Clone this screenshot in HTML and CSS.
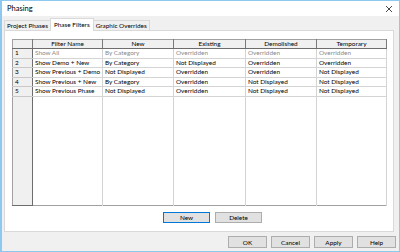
FILE: index.html
```html
<!DOCTYPE html>
<html lang="en">
<head>
    <meta charset="UTF-8">
    <title>Phasing</title>
    <link rel="stylesheet" href="styles.css">
</head>
<body>

<div class="dialog">
    <div class="titlebar">
        <span class="title">Phasing</span>
        <svg class="close" width="8" height="8" viewBox="0 0 8 8">
            <path d="M1 1 L7 7 M7 1 L1 7" stroke="#333" stroke-width="0.9" fill="none"/>
        </svg>
    </div>

    <div class="tabs">
        <div class="tab">Project Phases</div>
        <div class="tab active">Phase Filters</div>
        <div class="tab">Graphic Overrides</div>
    </div>

    <div class="panel">
        <table class="grid">
            <colgroup>
                <col class="c-num">
                <col class="c-name">
                <col class="c-new">
                <col class="c-existing">
                <col class="c-demo">
                <col class="c-temp">
            </colgroup>
            <thead>
                <tr>
                    <th class="rownum"></th>
                    <th>Filter Name</th>
                    <th>New</th>
                    <th>Existing</th>
                    <th>Demolished</th>
                    <th>Temporary</th>
                </tr>
            </thead>
            <tbody>
                <tr class="readonly">
                    <td class="rownum">1</td>
                    <td>Show All</td>
                    <td>By Category</td>
                    <td>Overridden</td>
                    <td>Overridden</td>
                    <td>Overridden</td>
                </tr>
                <tr>
                    <td class="rownum">2</td>
                    <td>Show Demo + New</td>
                    <td>By Category</td>
                    <td>Not Displayed</td>
                    <td>Overridden</td>
                    <td>Overridden</td>
                </tr>
                <tr>
                    <td class="rownum">3</td>
                    <td>Show Previous + Demo</td>
                    <td>Not Displayed</td>
                    <td>Overridden</td>
                    <td>Overridden</td>
                    <td>Not Displayed</td>
                </tr>
                <tr>
                    <td class="rownum">4</td>
                    <td>Show Previous + New</td>
                    <td>By Category</td>
                    <td>Overridden</td>
                    <td>Not Displayed</td>
                    <td>Not Displayed</td>
                </tr>
                <tr>
                    <td class="rownum">5</td>
                    <td>Show Previous Phase</td>
                    <td>Not Displayed</td>
                    <td>Overridden</td>
                    <td>Not Displayed</td>
                    <td>Not Displayed</td>
                </tr>
                <!-- empty space under the rows -->
                <tr class="filler">
                    <td class="rownum"></td>
                    <td></td>
                    <td></td>
                    <td></td>
                    <td></td>
                    <td></td>
                </tr>
            </tbody>
        </table>

        <div class="panel-actions">
            <button class="btn default">New</button>
            <button class="btn">Delete</button>
        </div>
    </div>

    <div class="footer">
        <button class="btn">OK</button>
        <button class="btn">Cancel</button>
        <button class="btn">Apply</button>
        <button class="btn">Help</button>
    </div>
</div>

</body>
</html>
```

FILE: styles.css
```css
body {
    margin: 0;
    padding: 0;
    font-family: Lato, "Liberation Sans", sans-serif;
    font-size: 6.4px;
    color: #000;
    background: #fff;
}

.dialog {
    width: 400px;
    height: 252px;
    box-sizing: border-box;
    border: 1px solid #8dc8ef;
    border-left-width: 2px;
    background-color: #f0f0f0;
    display: flex;
    flex-direction: column;
}

.titlebar {
    height: 15px;
    flex: none;
    background-color: #fff;
    display: flex;
    align-items: center;
    justify-content: space-between;
    padding: 0 6px 0 5px;
}

.title {
    font-size: 7.5px;
}

.tabs {
    height: 14px;
    flex: none;
    display: flex;
    align-items: flex-end;
    padding-left: 2px;
}

.tab {
    height: 10px;
    line-height: 10px;
    padding: 0 2px;
    border: 1px solid #d9d9d9;
    border-bottom: none;
    box-sizing: border-box;
    background-color: #f0f0f0;
    white-space: nowrap;
}

.tab + .tab {
    margin-left: -1px;
}

.tab.active {
    height: 13px;
    line-height: 11px;
    padding: 0 3px;
    margin-bottom: -1px;
    background-color: #fff;
    position: relative;
    z-index: 1;
}

.panel {
    height: 202px;
    flex: none;
    box-sizing: border-box;
    margin: 0 5px 0 2px;
    padding: 8px 6px 0 7px;
    border: 1px solid #d9d9d9;
    background-color: #fff;
    display: flex;
    flex-direction: column;
}

.grid {
    width: 375px;
    height: 167px;
    table-layout: fixed;
    border-collapse: collapse;
    border: 1px solid #a0a0a0;
}

.c-num { width: 20px; }
.c-name { width: 70px; }
.c-new { width: 71px; }
.c-existing { width: 72px; }
.c-demo { width: 71px; }
.c-temp { width: 70px; }

.grid th {
    height: 8px;
    padding: 0;
    font-weight: normal;
    text-align: center;
    background-color: #f0f0f0;
    border-right: 1px solid #7a7a7a;
    border-bottom: 1px solid #6d6d6d;
    line-height: 8px;
}

.grid td {
    height: 8.5px;
    padding: 0 0 0 2px;
    border-right: 1px solid #d4d4d4;
    border-bottom: 1px solid #d4d4d4;
    line-height: 8px;
    white-space: nowrap;
    overflow: hidden;
}

.grid td.rownum {
    background-color: #f0f0f0;
    padding-left: 2px;
    border-right: 1px solid #6d6d6d;
    border-bottom: 1px solid #c8c8c8;
}

.grid .readonly td {
    color: #8a8a8a;
}

.grid .readonly td.rownum {
    color: #000;
}

.grid .filler td {
    height: auto;
    border-bottom: none;
}

.grid .filler td.rownum {
    border-bottom: 1px solid #6d6d6d;
}

.panel-actions {
    display: flex;
    gap: 5px;
    margin-top: 6px;
    padding-left: 151px;
}

.btn {
    width: 47px;
    height: 11px;
    padding: 0;
    box-sizing: border-box;
    font-family: inherit;
    font-size: 6.4px;
    line-height: 9px;
    color: #000;
    background-color: #e1e1e1;
    border: 1px solid #adadad;
    border-radius: 0;
}

.btn.default {
    border-color: #0078d7;
}

.footer {
    flex: 1;
    display: flex;
    justify-content: flex-end;
    align-items: flex-start;
    gap: 4px;
    padding: 4px 3px 0 0;
}

.footer .btn {
    width: 39px;
    height: 12px;
}
```
